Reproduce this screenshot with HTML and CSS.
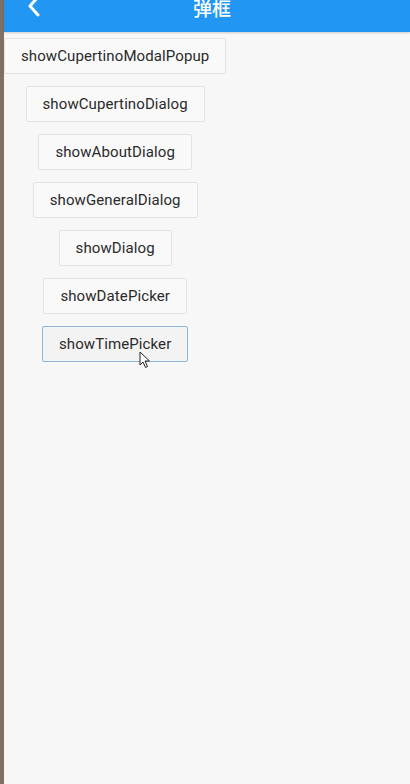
FILE: index.html
```html
<!DOCTYPE html>
<html lang="zh">
<head>
<meta charset="utf-8">
<link rel="stylesheet" href="styles.css">
</head>
<body>
<div class="frame">
  <div class="edge"></div>
  <div class="screen">
    <header class="appbar">
      <div class="toolbar">
        <svg class="back" width="14" height="22" viewBox="0 0 14 22"><path d="M11 2 L3 11 L11 20" fill="none" stroke="#fff" stroke-width="3" stroke-linecap="round" stroke-linejoin="round"/></svg>
        <div class="title">弹框</div>
      </div>
    </header>
    <main class="list">
      <div class="slot"><button class="btn">showCupertinoModalPopup</button></div>
      <div class="slot"><button class="btn">showCupertinoDialog</button></div>
      <div class="slot"><button class="btn">showAboutDialog</button></div>
      <div class="slot"><button class="btn">showGeneralDialog</button></div>
      <div class="slot"><button class="btn">showDialog</button></div>
      <div class="slot"><button class="btn">showDatePicker</button></div>
      <div class="slot pointer"><button class="btn focus">showTimePicker</button><svg class="cursor" width="12" height="18" viewBox="0 0 12 18"><path d="M1 1 L1 14 L4 11 L6.5 16.5 L8.5 15.5 L6 10 L10.5 10 Z" fill="#fff" stroke="#222" stroke-width="1" stroke-linejoin="round"/></svg></div>
    </main>
  </div>
</div>
</body>
</html>
```
FILE: styles.css
```css
html, body {
  margin: 0;
  padding: 0;
  height: 100%;
}
body {
  font-family: Roboto, "Noto Sans CJK SC", sans-serif;
}
.frame {
  display: flex;
  height: 784px;
  overflow: hidden;
}
.edge {
  width: 4px;
  flex: none;
  background: #7f7060;
}
.screen {
  flex: 1;
  background: #f7f7f7;
  display: flex;
  flex-direction: column;
}
.appbar {
  height: 32px;
  overflow: hidden;
  background: #2196f3;
  box-shadow: 0 1px 2px rgba(0,0,0,0.18);
  position: relative;
  z-index: 1;
}
.toolbar {
  height: 56px;
  margin-top: -21px;
  display: flex;
  align-items: center;
  justify-content: center;
  position: relative;
}
.back {
  position: absolute;
  left: 23px;
  top: 16px;
}
.title {
  color: #fff;
  font-size: 19px;
  font-weight: 500;
  margin-left: 10px;
}
.list {
  display: flex;
  flex-direction: column;
  align-items: center;
  align-self: flex-start;
}
.slot {
  height: 48px;
  display: flex;
  align-items: center;
}
.pointer {
  position: relative;
}
.btn {
  height: 36px;
  padding: 0 16px;
  border: 1px solid #e3e3e3;
  border-radius: 2px;
  background: #f9f9f9;
  color: #2a2a2a;
  font-family: Roboto, sans-serif;
  font-size: 15px;
  letter-spacing: 0.1px;
}
.btn.focus {
  border-color: #8fb5d9;
  background: #f3f3f3;
}
.cursor {
  position: absolute;
  left: 97px;
  top: 31px;
}
```
